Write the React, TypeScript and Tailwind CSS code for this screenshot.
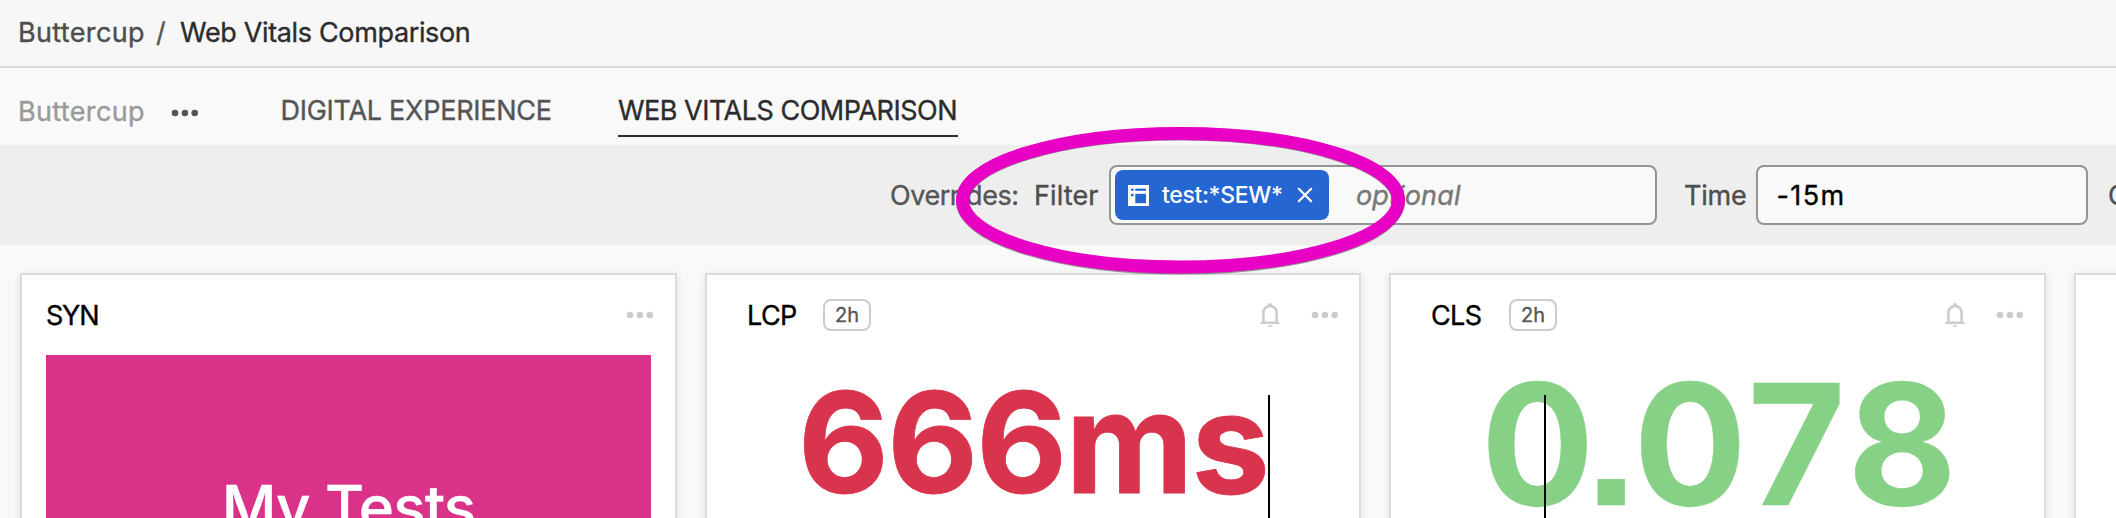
import type { ReactNode } from "react";

function Dots({ className }: { className: string }) {
  return (
    <svg width="28" height="8" viewBox="0 0 28 8" fill="currentColor" className={`shrink-0 ${className}`}>
      <circle cx="4" cy="4" r="3.3" />
      <circle cx="13.9" cy="4" r="3.3" />
      <circle cx="23.7" cy="4" r="3.3" />
    </svg>
  );
}

function Bell() {
  return (
    <svg width="20" height="24" viewBox="0 0 20 24" fill="none" className="shrink-0 text-[#cccccc]">
      <path d="M3.4 20V9.6a6.6 6.6 0 0 1 13.2 0V20" stroke="currentColor" strokeWidth="2.6" />
      <path d="M1.6 18.6h16.8L20 20.6V21H0v-.4z" fill="currentColor" />
      <path d="M8 3V1.7a2 1.7 0 0 1 4 0V3zM7.6 22.3h4.8a2.4 1.7 0 0 1-4.8 0z" fill="currentColor" />
    </svg>
  );
}

function FieldIcon() {
  return (
    <svg width="21" height="21" viewBox="0 0 21 21" className="shrink-0">
      <rect width="21" height="21" fill="#ffffff" />
      <g fill="#2666d2">
        <rect x="3" y="3.6" width="2.6" height="2.2" />
        <rect x="7.3" y="3.6" width="10.7" height="2.2" />
        <rect x="3" y="8.8" width="2.6" height="2.4" />
        <rect x="7.3" y="8.8" width="10.7" height="9.4" />
      </g>
    </svg>
  );
}

type CardProps = {
  title: string;
  titleWidth?: string;
  badge?: string;
  children?: ReactNode;
};

function MetricCard({ title, titleWidth = "w-[76px]", badge, children }: CardProps) {
  return (
    <section className="relative h-[270px] min-w-0 border-2 border-[#dcdcdc] bg-white shadow-[0_2px_8px_rgba(0,0,0,0.10)]">
      <div className="flex h-20 items-center pr-5 pl-10">
        <h2 className={`${titleWidth} pt-0.5 text-[27px] tracking-[-0.6px] text-black`}>{title}</h2>
        {badge && (
          <span className="flex h-8 w-12 items-center justify-center rounded-[8px] border-2 border-[#cccccc] text-[20px] text-[#555555]">
            {badge}
          </span>
        )}
        <div className="ml-auto flex items-center">
          <Bell />
          <Dots className="ml-[31px] text-[#cccccc]" />
        </div>
      </div>
      {children}
    </section>
  );
}

export default function App() {
  return (
    <div className="relative h-[518px] w-[2116px] overflow-hidden bg-[#f9f9f9] font-['Inter','Liberation_Sans',sans-serif] whitespace-nowrap [-webkit-text-stroke:0.35px]">
      <header className="flex h-[68px] items-center border-b-2 border-[#dcdcdc] bg-[#f7f7f7] pl-[18px] text-[27px]">
        <span className="w-[138px] tracking-[0.35px] text-[#4d4d4d]">Buttercup</span>
        <span className="w-6 text-[#555555]">/</span>
        <span className="tracking-[-0.35px] text-[#2c2c2c]">Web Vitals Comparison</span>
      </header>

      <nav className="flex h-[77px] items-center pt-[9px] pl-[18px] text-[27px]">
        <span className="w-[152.5px] pt-0.5 tracking-[0.35px] text-[#999999]">Buttercup</span>
        <Dots className="mt-1 text-[#555555]" />
        <span className="ml-[82px] w-[337.5px] tracking-[-0.27px] text-[#555555]">DIGITAL EXPERIENCE</span>
        <span className="flex h-[52px] w-[340px] items-center border-b-2 border-[#2c2c2c] pt-0.5 tracking-[-0.5px] text-[#2c2c2c]">
          WEB VITALS COMPARISON
        </span>
      </nav>

      <div className="flex h-[100px] items-center bg-[#eeeeee] pl-[890px] text-[27px] text-[#555555]">
        <span className="w-[144px] shrink-0 pt-0.5 tracking-[-0.45px]">Overrides:</span>
        <span className="w-[75px] shrink-0 pt-0.5 tracking-[0.1px] text-[#4d4d4d]">Filter</span>
        <div className="flex h-[60px] w-[548px] shrink-0 items-center rounded-[8px] border-2 border-[#949494] bg-[#f9f9f9] pl-1">
          <span className="flex h-[50px] w-[214px] items-center rounded-[8px] bg-[#2666d2] pl-[13px] text-[23px] font-medium tracking-[-0.35px] text-white [-webkit-text-stroke:0]">
            <FieldIcon />
            <span className="ml-[13px] w-[135px]">test:*SEW*</span>
            <svg width="16" height="16" viewBox="0 0 16 16" stroke="currentColor" strokeWidth="2.2" strokeLinecap="round">
              <path d="M1.8 1.8l12.4 12.4M14.2 1.8L1.8 14.2" />
            </svg>
          </span>
          <span className="ml-[27px] pt-0.5 tracking-[0.15px] text-[#777777] italic">optional</span>
        </div>
        <span className="ml-[27px] w-[72px] shrink-0 pt-0.5 tracking-[-0.2px] text-[#4d4d4d]">Time</span>
        <div className="flex h-[60px] w-[332px] shrink-0 items-center rounded-[8px] border-2 border-[#949494] bg-[#f9f9f9] pt-0.5 pl-[18.5px] tracking-[1.4px] text-black">
          -15m
        </div>
        <span className="ml-[20px] pt-0.5 text-[#4d4d4d]">C</span>
      </div>

      <main className="grid grid-cols-[657px_656px_657px_657px] gap-7 pt-7 pl-5">
        <section className="h-[270px] border-2 border-[#dcdcdc] bg-white px-6 shadow-[0_2px_8px_rgba(0,0,0,0.10)]">
          <div className="flex h-20 items-center justify-between">
            <h2 className="pt-0.5 text-[27px] tracking-[-1.2px] text-black">SYN</h2>
            <Dots className="-mr-[3px] text-[#cccccc]" />
          </div>
          <div className="h-[184px] w-[605px] bg-[#da3189] pt-[122px] text-center text-[60px] leading-[60px] font-medium tracking-[-0.8px] text-white">
            My Tests
          </div>
        </section>

        <MetricCard title="LCP" badge="2h">
          <div className="pl-[91px] text-[140px] leading-[174px] font-bold tracking-[-1.75px] text-[#d9344d] [-webkit-text-stroke:0.8px]">
            666ms
          </div>
          <div className="absolute top-[120px] left-[561px] h-[148px] w-0.5 bg-black" />
        </MetricCard>

        <MetricCard title="CLS" titleWidth="w-[78px]" badge="2h">
          <div className="pl-[90px] text-[168px] leading-[178px] font-bold text-[#86d186] [font-feature-settings:'ss07']">
            <span className="tracking-[-11px]">0</span>
            <span className="tracking-[-6px]">.</span>
            <span className="tracking-[1px]">0</span>
            <span className="tracking-[2px]">7</span>8
          </div>
          <div className="absolute top-[120px] left-[153px] h-[148px] w-0.5 bg-black" />
        </MetricCard>

        <MetricCard title="" />
      </main>

      <svg className="pointer-events-none absolute top-[120px] left-[948px]" width="466" height="162" viewBox="0 0 466 162" fill="none">
        <ellipse cx="232.5" cy="81" rx="218" ry="67" stroke="#444444" strokeOpacity="0.55" strokeWidth="13.2" />
        <ellipse cx="232.5" cy="80.2" rx="218" ry="66.8" stroke="#e800c4" strokeWidth="13" />
      </svg>
    </div>
  );
}
